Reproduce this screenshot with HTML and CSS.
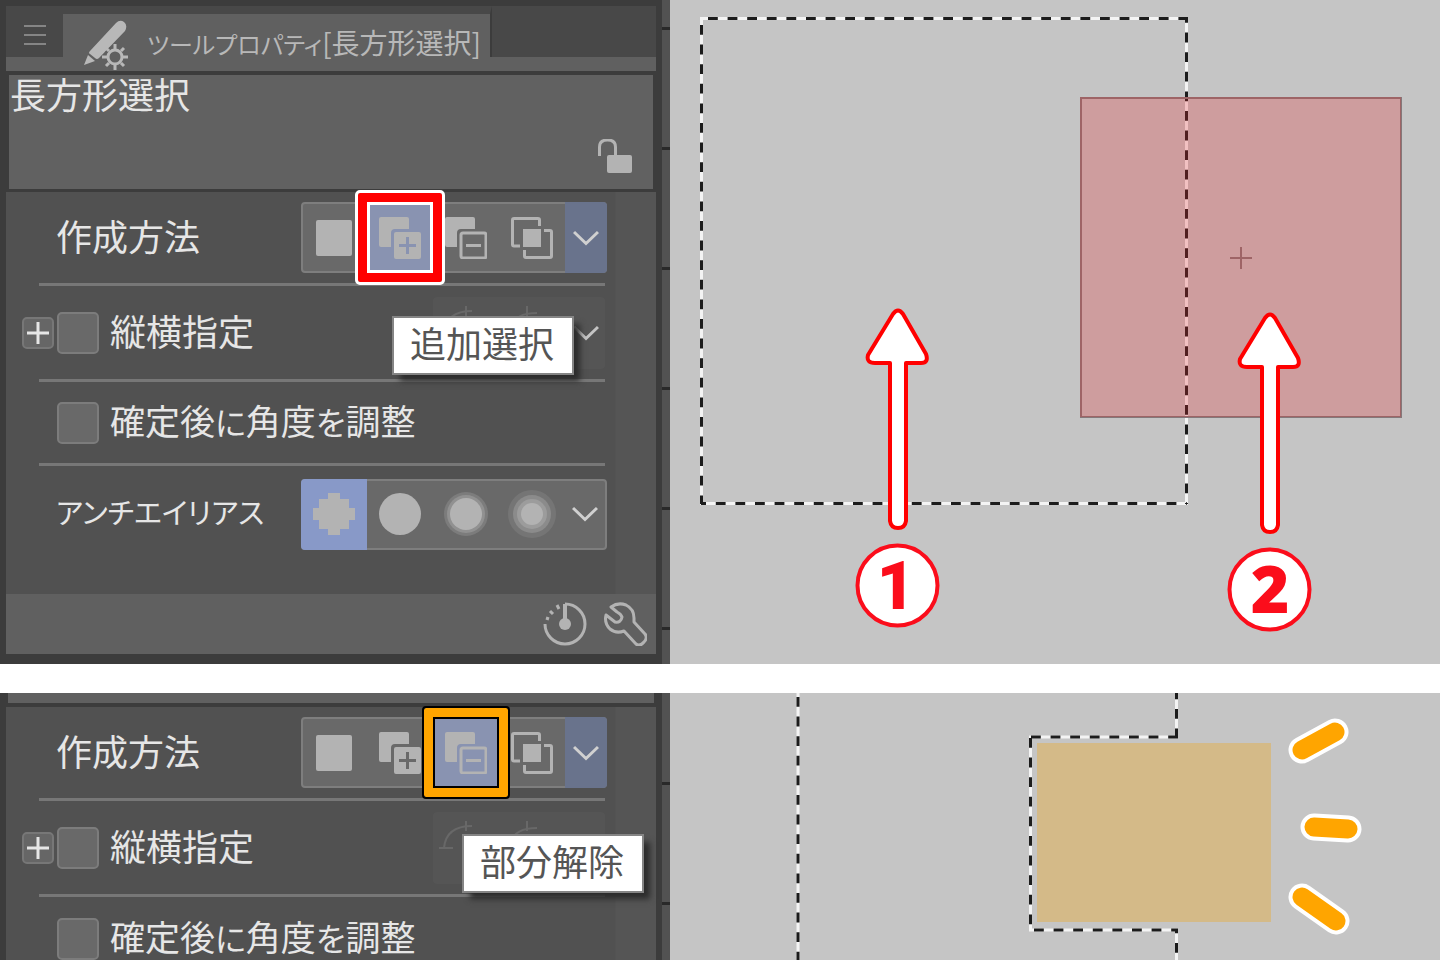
FILE: index.html
```html
<!DOCTYPE html>
<html lang="ja">
<head>
<meta charset="utf-8">
<title>ツールプロパティ</title>
<link rel="stylesheet" href="styles.css">
</head>
<body>
<svg class="defs" aria-hidden="true">
  <symbol id="i-new" viewBox="0 0 42 42"><rect x="3" y="3" width="36" height="36" rx="2" fill="currentColor"/></symbol>
  <symbol id="i-add" viewBox="0 0 42 42">
    <path fill="currentColor" d="M2 0h26q2 0 2 2v10H16q-4 0-4 4v14H2q-2 0-2-2V2q0-2 2-2z"/>
    <path fill="currentColor" fill-rule="evenodd" d="M17 15h23q2 0 2 2v23q0 2-2 2H17q-2 0-2-2V17q0-2 2-2zM27 20v7h-7v3h7v7h3v-7h7v-3h-7v-7z"/>
  </symbol>
  <symbol id="i-sub" viewBox="0 0 42 42">
    <path fill="currentColor" d="M2 0h26q2 0 2 2v10H16q-4 0-4 4v14H2q-2 0-2-2V2q0-2 2-2z"/>
    <rect x="16" y="16" width="25" height="25" rx="2" fill="none" stroke="currentColor" stroke-width="3"/>
    <path d="M21 28.500h15" stroke="currentColor" stroke-width="3"/>
  </symbol>
  <symbol id="i-int" viewBox="0 0 42 42">
    <rect x="12" y="12" width="18" height="18" fill="currentColor"/>
    <path fill="none" stroke="currentColor" stroke-width="3" d="M9 29H3q-1.500 0-1.500-1.500V3q0-1.500 1.500-1.500h24q1.500 0 1.500 1.500v6M33 13.500h6q1.500 0 1.500 1.500v24q0 1.500-1.500 1.500H15q-1.500 0-1.500-1.500v-6"/>
  </symbol>
  <symbol id="i-chev" viewBox="0 0 26 16"><path d="M1 2l12 11.500L25 2" fill="none" stroke="currentColor" stroke-width="3"/></symbol>
  <symbol id="i-plus" viewBox="0 0 22 22"><path d="M11 0v22M0 11h22" stroke="currentColor" stroke-width="3"/></symbol>
  <symbol id="i-aspect" viewBox="0 0 172 72">
    <path d="M6 36h14M33 9v10M11 36q2-22 28-22M94 9v10M78 30q4-14 26-14M64 36h12" fill="none" stroke="currentColor" stroke-width="2"/>
  </symbol>
</svg>

<main class="sheet">
  <section class="shot">
    <div class="panel">
      <div class="frame">
        <div class="tabs">
          <button class="menu" aria-label="メニュー"><svg width="22" height="22" viewBox="0 0 22 22"><path d="M0 2h22M0 11h22M0 20h22" stroke="currentColor" stroke-width="2"/></svg></button>
          <button class="tab">
            <svg class="brush" width="46" height="50" viewBox="0 0 46 50">
              <path d="M7 31L33 3q4-4 8-1t1 9L16 38q-2 2-4 0l-5-4q-2-1 0-3z" fill="currentColor"/>
              <path d="M5 35l7 6-11 4z" fill="currentColor"/>
              <circle cx="32" cy="37" r="8" fill="none" stroke="#606060" stroke-width="6"/>
              <g fill="#606060" stroke="currentColor" stroke-width="3"><circle cx="32" cy="37" r="7"/><path d="M32 29v-5M32 45v5M24 37h-5M40 37h5M26 31l-3-3M38 31l3-3M26 43l-3 3M38 43l3 3"/></g>
            </svg>
            <span class="tab-text"><span class="kana">ツールプロパティ</span>[長方形選択]</span>
          </button>
        </div>
        <div class="tool">
          <h1 class="tool-name">長方形選択</h1>
          <button class="lock" aria-label="ロック"><svg width="34" height="34" viewBox="0 0 34 34"><rect x="9" y="16" width="25" height="18" rx="2" fill="currentColor"/><path d="M1.500 17V8q0-7 8-7t8 7v9" fill="none" stroke="currentColor" stroke-width="3"/></svg></button>
        </div>
        <div class="rows">
          <div class="row">
            <span class="name">作成方法</span>
            <div class="group">
              <button class="cell" aria-label="新規選択"><svg class="icon"><use href="#i-new"/></svg></button>
              <button class="cell marked red" aria-label="追加選択"><svg class="icon"><use href="#i-add"/></svg></button>
              <button class="cell" aria-label="部分解除"><svg class="icon"><use href="#i-sub"/></svg></button>
              <button class="cell" aria-label="選択中を選択"><svg class="icon"><use href="#i-int"/></svg></button>
              <button class="cell more on" aria-label="その他"><svg class="chev"><use href="#i-chev"/></svg></button>
            </div>
          </div>
          <div class="row ratio">
            <button class="expand" aria-label="展開"><svg width="22" height="22"><use href="#i-plus"/></svg></button>
            <input type="checkbox" id="ratio-a"><label for="ratio-a">縦横指定</label>
            <div class="ghost"><svg class="aspect"><use href="#i-aspect"/></svg><svg class="chev"><use href="#i-chev"/></svg></div>
            <div class="tip tip-add" role="tooltip">追加選択</div>
          </div>
          <div class="row angle">
            <input type="checkbox" id="angle-a"><label for="angle-a">確定後<span class="kana">に</span>角度<span class="kana">を</span>調整</label>
          </div>
          <div class="row aa">
            <span class="name kana">アンチエイリアス</span>
            <div class="group">
              <button class="cell chosen" aria-label="無し"><svg class="icon" viewBox="0 0 42 42"><path fill="currentColor" d="M15 0h12v6h9v9h6v12h-6v9h-9v6H15v-6H6v-9H0V15h6V6h9z"/></svg></button>
              <button class="cell" aria-label="弱"><svg class="icon" viewBox="0 0 42 42"><circle cx="21" cy="21" r="21" fill="currentColor"/></svg></button>
              <button class="cell" aria-label="中"><svg class="icon" viewBox="0 0 42 42"><circle cx="21" cy="21" r="22" fill="#7c7c7c"/><circle cx="21" cy="21" r="19" fill="#919191"/><circle cx="21" cy="21" r="16" fill="currentColor"/></svg></button>
              <button class="cell" aria-label="強"><svg class="icon" viewBox="0 0 42 42"><circle cx="21" cy="21" r="24" fill="#757575"/><circle cx="21" cy="21" r="19" fill="#8b8b8b"/><circle cx="21" cy="21" r="15" fill="#9c9c9c"/><circle cx="21" cy="21" r="11" fill="currentColor"/></svg></button>
              <button class="cell more" aria-label="その他"><svg class="chev"><use href="#i-chev"/></svg></button>
            </div>
          </div>
        </div>
        <div class="foot">
          <button aria-label="初期設定"><svg width="44" height="44" viewBox="0 0 44 44"><path d="M22 2a20 20 0 1 1-20 20M3 16l3 1M7 9l3 3M14 3l2 4" fill="none" stroke="currentColor" stroke-width="3"/><path d="M22 2v20" stroke="currentColor" stroke-width="4"/><circle cx="22" cy="22" r="6" fill="currentColor"/></svg></button>
          <button aria-label="詳細設定"><svg width="44" height="44" viewBox="0 0 44 44"><path d="M8 5Q15 0 23 3q8 4 8 13v4l11 12q3 4-1 8-4 5-8 2L21 29q-8 3-14-2-6-6-4-14l9 7q6 1 7-5-1-3-5-5z" fill="none" stroke="currentColor" stroke-width="3" stroke-linejoin="round"/></svg></button>
        </div>
      </div>
    </div>
    <div class="ruler"></div>
    <div class="canvas">
      <svg class="art" role="img" aria-label="追加選択の例"><g transform="translate(-670 0)">
        <rect class="ants-base" x="701.500" y="18.500" width="485" height="485"/>
        <g class="ants">
          <path d="M701 18.500h487" stroke-dashoffset="-7"/><path d="M701.500 18v486" stroke-dashoffset="-7"/>
          <path d="M701 503.500h486" stroke-dashoffset="-14.800"/><path d="M1186.500 18v486" stroke-dashoffset="-14.600"/>
        </g>
        <rect x="1081" y="98" width="320" height="319" fill="none" stroke="#84787a" stroke-width="2"/>
        <path d="M1230 258h22M1241 247v22" stroke="#84787a" stroke-width="2"/>
        <rect x="1080" y="97" width="321" height="320" fill="rgb(237 41 45)" fill-opacity=".25"/>
        <path id="arrow" d="M893 314q5-7 10 0l23 40q3 9-5 9h-15v158q-1 7-8 7t-8-7V363h-15q-9 0-7-8z" fill="#fff" stroke="#f00" stroke-width="4" stroke-linejoin="round"/>
        <use href="#arrow" x="372" y="4"/>
        <g class="badge"><circle cx="897.500" cy="585.500" r="40"/><text class="one" x="896" y="609">1</text></g>
        <g class="badge"><circle cx="1269.500" cy="589.500" r="40"/><text x="1270" y="613">2</text></g>
      </g></svg>
    </div>
  </section>

  <section class="shot second">
    <div class="panel">
      <div class="frame">
        <div class="tool-end"></div>
        <div class="rows">
          <div class="row">
            <span class="name">作成方法</span>
            <div class="group">
              <button class="cell" aria-label="新規選択"><svg class="icon"><use href="#i-new"/></svg></button>
              <button class="cell" aria-label="追加選択"><svg class="icon"><use href="#i-add"/></svg></button>
              <button class="cell marked orange" aria-label="部分解除"><svg class="icon"><use href="#i-sub"/></svg></button>
              <button class="cell" aria-label="選択中を選択"><svg class="icon"><use href="#i-int"/></svg></button>
              <button class="cell more on" aria-label="その他"><svg class="chev"><use href="#i-chev"/></svg></button>
            </div>
          </div>
          <div class="row ratio">
            <button class="expand" aria-label="展開"><svg width="22" height="22"><use href="#i-plus"/></svg></button>
            <input type="checkbox" id="ratio-b"><label for="ratio-b">縦横指定</label>
            <div class="ghost"><svg class="aspect"><use href="#i-aspect"/></svg></div>
            <div class="tip tip-sub" role="tooltip">部分解除</div>
          </div>
          <div class="row angle">
            <input type="checkbox" id="angle-b"><label for="angle-b">確定後<span class="kana">に</span>角度<span class="kana">を</span>調整</label>
          </div>
        </div>
      </div>
    </div>
    <div class="ruler"></div>
    <div class="canvas">
      <svg class="art" role="img" aria-label="部分解除の例"><g transform="translate(-670 -693)">
        <path class="ants-base" d="M798 693v300M1176.500 693v44H1030.500v193H1176.500v60"/>
        <g class="ants">
          <path d="M798 693v300" stroke-dashoffset="-4"/><path d="M1176.500 693v45" stroke-dashoffset="-16"/>
          <path d="M1030 737h148" stroke-dashoffset="-1"/><path d="M1030.500 737v193" stroke-dashoffset="-1"/>
          <path d="M1030 930h148" stroke-dashoffset="-4"/><path d="M1176.500 930v60" stroke-dashoffset="-13"/>
        </g>
        <rect x="1037" y="743" width="234" height="179" fill="#d4ba88"/>
        <path d="M1302 750l33-18M1314 827l34 2M1302 897l34 24" fill="none" stroke="#fff" stroke-width="27" stroke-linecap="round"/>
        <path d="M1302 750l33-18M1314 827l34 2M1302 897l34 24" fill="none" stroke="#ffa500" stroke-width="19" stroke-linecap="round"/>
      </g></svg>
    </div>
  </section>
</main>
</body>
</html>
```
FILE: styles.css
```css
* { box-sizing: border-box; }

body {
  margin: 0;
  background: #fff;
  font-family: "Noto Sans CJK JP", "Noto Sans", sans-serif;
  color: #e6e6e6;
}

button {
  padding: 0;
  border: 0;
  background: none;
  color: inherit;
  font: inherit;
}

svg { display: block; }

.defs {
  position: absolute;
  width: 0;
  height: 0;
}

.sheet {
  display: grid;
  grid-template-rows: auto 1fr;
  gap: 29px;
  height: 100vh;
  overflow: hidden;
}

.shot {
  display: grid;
  grid-template-columns: 662px 8px 1fr;
  min-height: 0;
  overflow: hidden;
}

.panel {
  padding: 6px 6px 4px;
  background: #3c3c3c;
}

.second .panel { padding-top: 0; }

.tabs {
  display: flex;
  align-items: flex-start;
  height: 65px;
  border-bottom: 14px solid #606060;
  background: #484848;
}

.menu {
  display: flex;
  justify-content: center;
  align-items: center;
  width: 57px;
  height: 51px;
  padding-top: 6px;
  color: #858585;
}

.tab {
  display: flex;
  align-items: center;
  gap: 18px;
  height: 51px;
  padding: 4px 9px 0 20px;
  border-top: 8px solid #484848;
  border-right: 2px solid #3c3c3c;
  background: #606060;
  color: #b8b8b8;
}

.brush { margin-top: 14px; }

.tab-text {
  margin-top: 10px;
  font-size: 28px;
  line-height: 40px;
  white-space: nowrap;
}

.kana { font-feature-settings: "palt"; }

.tab-text .kana { font-size: 24px; }

.tool {
  display: flex;
  justify-content: space-between;
  align-items: flex-end;
  height: 114px;
  margin: 4px 3px 3px;
  padding: 0 21px 16px 1px;
  background: #616161;
}

.tool-name {
  align-self: flex-start;
  margin: 0;
  font-size: 36px;
  font-weight: 400;
  line-height: 36px;
}

.lock { color: #b3b3b3; }

.tool-end {
  height: 10px;
  margin: 0 2px 4px;
  background: #606060;
}

.rows {
  padding: 0 51px 32px 33px;
  background: linear-gradient(to left, #555 40px, #515151 41px);
}

.row {
  position: relative;
  display: flex;
  align-items: center;
  height: 94px;
  border-bottom: 3px solid #777;
  font-size: 36px;
  line-height: 40px;
}

.ratio { height: 96px; }

.angle { height: 84px; }

.angle label { font-size: 35px; }

.second .angle { border-bottom: 0; }

.aa {
  height: 96px;
  border-bottom: 0;
}

.name {
  flex: 1;
  padding: 0 0 6px 17px;
  white-space: nowrap;
}

.name.kana { font-size: 29px; }

.group {
  display: grid;
  grid-template-columns: 64px 66px 66px 66px 40px;
  height: 71px;
  margin-right: -2px;
  border: 2px solid #7e7e7e;
  border-radius: 4px;
  background: #696969;
}

.cell {
  position: relative;
  display: grid;
  place-items: center;
  color: #b3b3b3;
}

.cell:first-child { margin-left: -2px; }

.icon {
  width: 42px;
  height: 42px;
  overflow: visible;
}

.chev {
  width: 26px;
  height: 16px;
}

.more { color: #d0d0d0; }

.on {
  margin: -2px -2px -2px 0;
  border-radius: 0 4px 4px 0;
  background: #69738c;
}

.chosen {
  margin: -2px 0 -2px -2px;
  border-radius: 4px 0 0 4px;
  background: #8899c8;
}

.marked {
  z-index: 1;
  background: #8993b1;
}

.marked::after {
  content: "";
  position: absolute;
  inset: -11px -9px;
  border: 9px solid;
  border-radius: 2px;
}

.red::after {
  border-color: #f00;
  outline: 3px solid #fff;
  box-shadow: inset 0 0 0 3px #fff;
}

.orange::after {
  border-color: #ffa500;
  outline: 2px solid #000;
  box-shadow: inset 0 0 0 2px #000;
}

.expand {
  display: grid;
  place-items: center;
  width: 32px;
  height: 32px;
  margin: 0 3px 0 -17px;
  border: 2px solid #777;
  border-radius: 5px;
  background: #666;
}

input[type="checkbox"] {
  appearance: none;
  width: 42px;
  height: 42px;
  margin: 0 11px 0 0;
  border: 2px solid #7c7c7c;
  border-radius: 5px;
  background: #696969;
}

.angle input { margin-left: 18px; }

label {
  padding-bottom: 5px;
  white-space: nowrap;
}

label .kana { font-size: 32px; }

.ghost {
  position: relative;
  display: flex;
  justify-content: flex-end;
  align-items: center;
  width: 172px;
  height: 72px;
  margin-left: auto;
  padding-right: 6px;
  border-radius: 4px;
  background: #555;
  color: #c4c4c4;
}

.aspect {
  position: absolute;
  inset: 0;
  width: 172px;
  height: 72px;
  color: #686868;
}

.tip {
  position: absolute;
  z-index: 2;
  padding: 4px 18px 11px 16px;
  border: 2px solid #858585;
  background: #fff;
  color: #555;
  box-shadow: 7px 7px 6px -1px #2c2c2c;
  white-space: nowrap;
}

.tip-add {
  top: 30px;
  left: 353px;
}

.tip-sub {
  top: 33px;
  left: 423px;
}

.foot {
  display: flex;
  justify-content: flex-end;
  align-items: center;
  gap: 16px;
  height: 60px;
  padding-right: 9px;
  background: #606060;
  color: #b3b3b3;
}

.shot:first-child .panel {
  border-bottom: 6px solid #3c3c3c;
}

.ruler {
  background: repeating-linear-gradient(transparent 0 27px, #292929 27px 30px, transparent 30px 120px), #525252;
}

.second .ruler {
  background: repeating-linear-gradient(transparent 0 89px, #292929 89px 92px, transparent 92px 120px), #525252;
}

.canvas {
  min-width: 0;
  min-height: 0;
  overflow: hidden;
  background: #c5c5c5;
}

.art {
  width: 100%;
  height: 100%;
}

.ants-base {
  fill: none;
  stroke: #f4f4f4;
  stroke-width: 3;
}

.ants {
  fill: none;
  stroke: #1c1c1c;
  stroke-width: 3;
  stroke-dasharray: 9.800;
}

.badge circle {
  fill: #fff;
  stroke: #fb0d1b;
  stroke-width: 4;
}

.badge text {
  fill: #fb0d1b;
  font: 800 66px "Open Sans", sans-serif;
  text-anchor: middle;
}

.badge .one {
  font-family: Roboto, sans-serif;
  font-weight: 900;
}
```
